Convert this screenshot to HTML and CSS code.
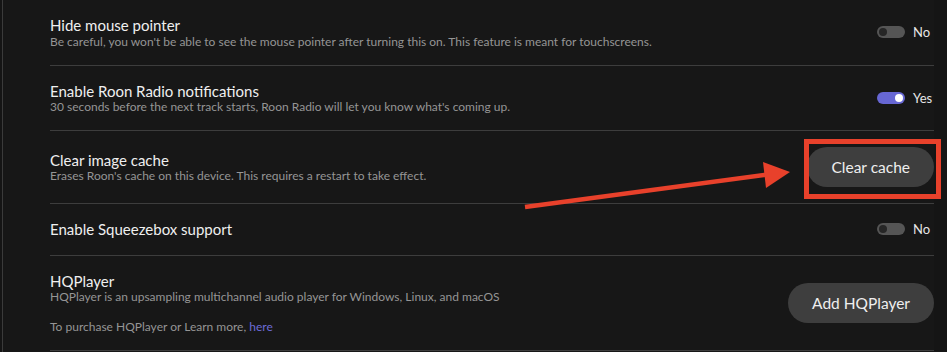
FILE: index.html
```html
<!DOCTYPE html>
<html lang="en">
<head>
  <meta charset="UTF-8">
  <meta name="viewport" content="width=device-width, initial-scale=1.0">
  <title>Settings</title>
  <link rel="stylesheet" href="styles.css">
</head>
<body>
	<div class="page">
		<div class="panel">
			<div class="settings">

				<div class="row">
					<div class="info">
						<div class="title">Hide mouse pointer</div>
						<div class="desc">Be careful, you won't be able to see the mouse pointer after turning this on. This feature is meant for touchscreens.</div>
					</div>
					<div class="switch-wrap">
						<span class="switch"></span>
						<span class="switch-label">No</span>
					</div>
				</div>

				<div class="row">
					<div class="info">
						<div class="title">Enable Roon Radio notifications</div>
						<div class="desc">30 seconds before the next track starts, Roon Radio will let you know what's coming up.</div>
					</div>
					<div class="switch-wrap">
						<span class="switch on"></span>
						<span class="switch-label">Yes</span>
					</div>
				</div>

				<div class="row">
					<div class="info">
						<div class="title">Clear image cache</div>
						<div class="desc">Erases Roon's cache on this device. This requires a restart to take effect.</div>
					</div>
					<button class="pill-button">Clear cache</button>
				</div>

				<div class="row">
					<div class="info">
						<div class="title">Enable Squeezebox support</div>
					</div>
					<div class="switch-wrap">
						<span class="switch"></span>
						<span class="switch-label">No</span>
					</div>
				</div>

				<div class="row">
					<div class="info">
						<div class="title">HQPlayer</div>
						<div class="desc">HQPlayer is an upsampling multichannel audio player for Windows, Linux, and macOS</div>
						<div class="desc spaced">To purchase HQPlayer or Learn more, <a href="#" class="link">here</a></div>
					</div>
					<button class="pill-button">Add HQPlayer</button>
				</div>

			</div>
		</div>

		<!-- annotation drawn over the screenshot -->
		<div class="highlight-box"></div>
		<svg class="arrow" width="947" height="352" viewBox="0 0 947 352">
			<line x1="525" y1="207" x2="772" y2="174" stroke="#e8412b" stroke-width="4.5"/>
			<polygon points="763,162 790,172 766,188" fill="#e8412b"/>
		</svg>
	</div>
</body>
</html>
```

FILE: styles.css
```css
body {
  margin: 0;
  background-color: #121212;
  font-family: Lato, "Open Sans", sans-serif;
  color: #ececec;
}

.page {
  position: relative;
  width: 947px;
  height: 352px;
  overflow: hidden;
  background-color: #151515;
}

.panel {
  margin-left: 2px;
  width: 932px;
  height: 100%;
  border-left: 1px solid #3b3b3b;
  background-color: #171717;
  padding-left: 47px;
  box-sizing: border-box;
  padding-right: 1px;
}

.settings {
  width: 884px;
}

.row {
  display: flex;
  align-items: center;
  justify-content: space-between;
  padding: 16px 0;
  border-bottom: 1px solid #3d3d3d;
}

.title {
  font-size: 15px;
  line-height: 18.5px;
  color: #efefef;
}

.desc {
  font-size: 12px;
  line-height: 14px;
  color: #959595;
}

.desc.spaced {
  margin-top: 16px;
}

.link {
  color: #6c6cd8;
  text-decoration: none;
}

.switch-wrap {
  display: flex;
  align-items: center;
}

.switch {
  position: relative;
  width: 28px;
  height: 12px;
  border-radius: 6px;
  background: #555;
}

.switch::after {
  content: "";
  position: absolute;
  top: 2px;
  left: 2px;
  width: 8px;
  height: 8px;
  border-radius: 50%;
  background: #262626;
}

.switch.on {
  background: #6767d4;
}

.switch.on::after {
  left: auto;
  right: 2px;
  background: #fff;
}

.switch-label {
  width: 21px;
  margin-left: 8px;
  font-size: 13px;
  color: #e6e6e6;
}

.pill-button {
  height: 40px;
  padding: 0 24px;
  border: none;
  border-radius: 20px;
  background: #3e3e3e;
  color: #eee;
  font-family: Lato, "Open Sans", sans-serif;
  font-size: 15.5px;
  cursor: pointer;
}

.highlight-box {
  position: absolute;
  left: 804px;
  top: 139px;
  width: 137px;
  height: 60px;
  border: 5px solid #e8412b;
  box-sizing: border-box;
}

.arrow {
  position: absolute;
  left: 0;
  top: 0;
}
```
